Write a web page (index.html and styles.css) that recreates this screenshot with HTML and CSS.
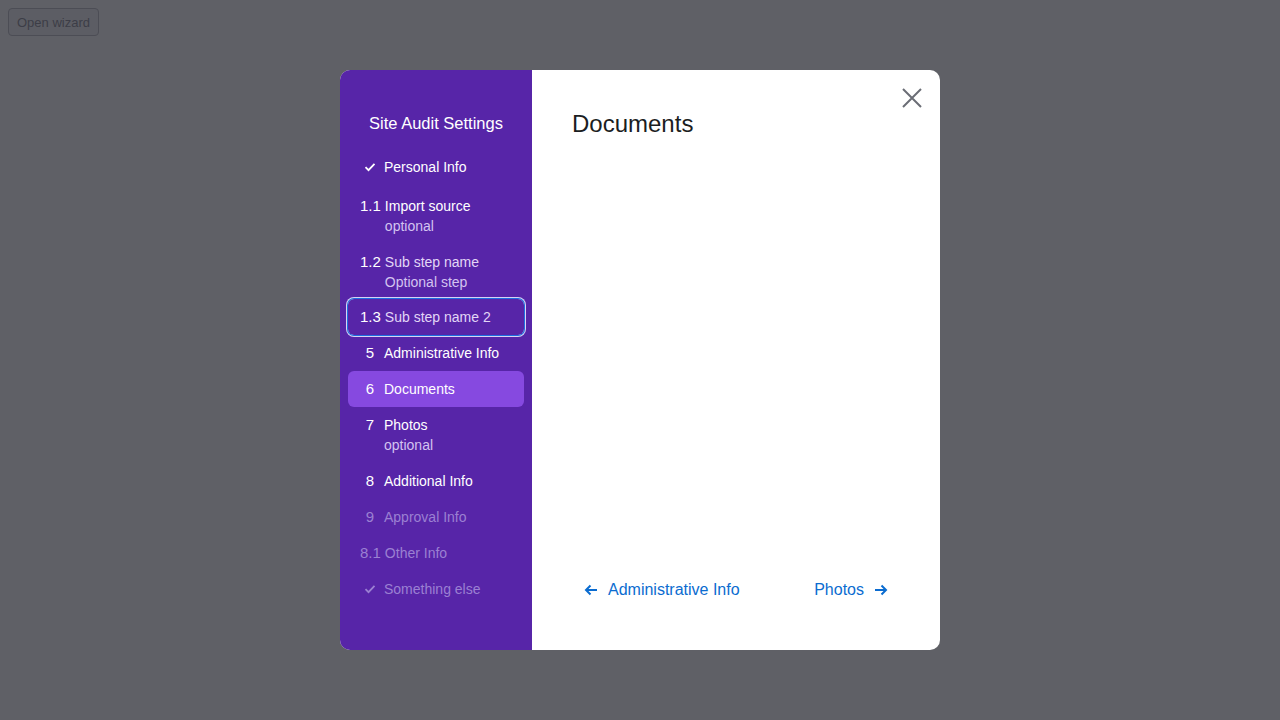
FILE: index.html
```html
<!DOCTYPE html>
<html>
<head>
    <title>Site Audit Settings</title>
    <link rel="stylesheet" href="styles.css">
</head>
<body>
    <button type="button" class="open-btn">Open wizard</button>

    <div class="overlay">
        <div class="wizard">
            <nav class="sidebar">
                <h3 class="sidebar-title">Site Audit Settings</h3>
                <ul class="steps">
                    <li class="step done">
                        <span class="num"><svg width="12" height="12" viewBox="0 0 12 12"><path d="M1.5 6.2l3 3 6-6.4" fill="none" stroke="currentColor" stroke-width="1.8"/></svg></span>
                        <span class="label">Personal Info</span>
                    </li>
                    <li class="step">
                        <span class="num">1.1</span>
                        <span class="label">Import source<small>optional</small></span>
                    </li>
                    <li class="step sub">
                        <span class="num">1.2</span>
                        <span class="label">Sub step name<small>Optional step</small></span>
                    </li>
                    <li class="step sub focused">
                        <span class="num">1.3</span>
                        <span class="label">Sub step name 2</span>
                    </li>
                    <li class="step">
                        <span class="num">5</span>
                        <span class="label">Administrative Info</span>
                    </li>
                    <li class="step active">
                        <span class="num">6</span>
                        <span class="label">Documents</span>
                    </li>
                    <li class="step">
                        <span class="num">7</span>
                        <span class="label">Photos<small>optional</small></span>
                    </li>
                    <li class="step">
                        <span class="num">8</span>
                        <span class="label">Additional Info</span>
                    </li>
                    <li class="step disabled">
                        <span class="num">9</span>
                        <span class="label">Approval Info</span>
                    </li>
                    <li class="step disabled">
                        <span class="num">8.1</span>
                        <span class="label">Other Info</span>
                    </li>
                    <li class="step disabled">
                        <span class="num"><svg width="12" height="12" viewBox="0 0 12 12"><path d="M1.5 6.2l3 3 6-6.4" fill="none" stroke="currentColor" stroke-width="1.8"/></svg></span>
                        <span class="label">Something else</span>
                    </li>
                </ul>
            </nav>

            <section class="content">
                <button type="button" class="close-btn" aria-label="Close">
                    <svg width="20" height="20" viewBox="0 0 20 20"><path d="M1 1l18 18M19 1L1 19" stroke="currentColor" stroke-width="2"/></svg>
                </button>
                <h2 class="content-title">Documents</h2>
                <div class="content-body"></div>
                <div class="footer">
                    <button type="button" class="nav-btn">
                        <svg width="14" height="12" viewBox="0 0 14 12"><path d="M13 6H2M6.5 1.5L2 6l4.5 4.5" fill="none" stroke="currentColor" stroke-width="2"/></svg>
                        Administrative Info
                    </button>
                    <button type="button" class="nav-btn">
                        Photos
                        <svg width="14" height="12" viewBox="0 0 14 12"><path d="M1 6h11M7.5 1.5L12 6l-4.5 4.5" fill="none" stroke="currentColor" stroke-width="2"/></svg>
                    </button>
                </div>
            </section>
        </div>
    </div>
</body>
</html>
```

FILE: styles.css
```css
body {
    font-family: "Liberation Sans", Arial, sans-serif;
    margin: 0;
    padding: 0;
    background-color: #5f6066;
    width: 1280px;
    height: 720px;
    overflow: hidden;
}
.open-btn {
    margin: 8px;
    height: 28px;
    padding: 0 8px;
    font-family: inherit;
    font-size: 13px;
    color: #3c3d47;
    background: #5c5d64;
    border: 1px solid #4c4d55;
    border-radius: 4px;
}
.overlay {
    display: flex;
    justify-content: center;
    padding-top: 26px;
}
.wizard {
    display: flex;
    width: 600px;
    height: 580px;
    border-radius: 10px;
    overflow: hidden;
    background: white;
}
.sidebar {
    width: 192px;
    flex-shrink: 0;
    background: #5725a8;
    color: white;
    padding: 41px 8px 0;
    box-sizing: border-box;
}
.sidebar-title {
    margin: 0 0 14px;
    font-size: 16.5px;
    font-weight: normal;
    line-height: 24px;
    text-align: center;
}
.steps {
    list-style: none;
    margin: 0;
    padding: 0;
}
.step {
    display: flex;
    align-items: flex-start;
    padding: 8px 12px;
    font-size: 14px;
    line-height: 20px;
    border-radius: 6px;
}
.step.done {
    margin-bottom: 3px;
}
.num {
    min-width: 20px;
    margin-right: 4px;
    font-size: 15px;
    text-align: center;
    display: flex;
    justify-content: center;
    align-items: center;
    height: 20px;
}
.label {
    display: flex;
    flex-direction: column;
}
.label small {
    font-size: 14px;
    color: #d3c3f0;
}
.step.sub {
    padding-bottom: 7px;
}
.step.sub .label {
    color: #e2d6f6;
}
.step.focused {
    padding: 8px 12px;
    box-shadow: 0 0 0 1px #1e6fe0, 0 0 0 2px #d8d2f4;
}
.step.active {
    background: #8649e0;
}
.step.disabled {
    color: #9b80d2;
}
.content {
    position: relative;
    flex: 1;
    display: flex;
    flex-direction: column;
    padding: 40px 40px 40px;
}
.close-btn {
    position: absolute;
    top: 18px;
    right: 18px;
    width: 20px;
    height: 20px;
    padding: 0;
    border: none;
    background: none;
    color: #6a6d75;
    cursor: pointer;
}
.content-title {
    margin: 0;
    font-size: 24px;
    font-weight: normal;
    line-height: 28px;
    color: #1b1d22;
}
.content-body {
    flex: 1;
}
.footer {
    display: flex;
    justify-content: space-between;
}
.nav-btn {
    display: flex;
    align-items: center;
    gap: 10px;
    height: 40px;
    padding: 0 12px;
    font-family: inherit;
    font-size: 16px;
    color: #0b6cd0;
    background: none;
    border: none;
    cursor: pointer;
}
```
